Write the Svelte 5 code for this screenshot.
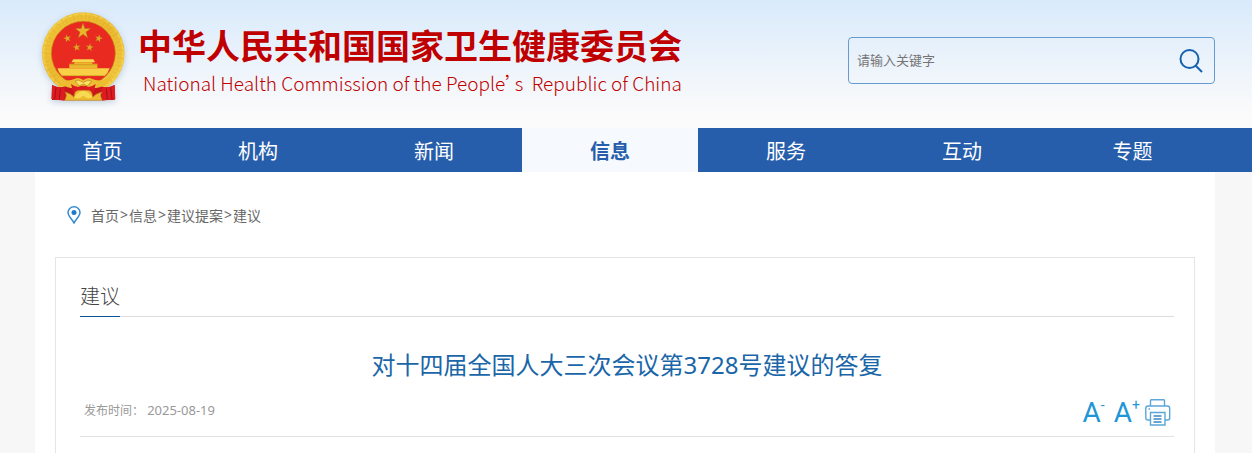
<script>
    const navItems = ['首页', '机构', '新闻', '信息', '服务', '互动', '专题']
    const crumbs = ['首页', '信息', '建议提案', '建议']
    const smallStars = [[112, 115, -15], [206, 115, 15], [140, 142, -8], [179, 142, 8]]
    const star = 'M0-24 5.500-7.500 23-7.500 9 3 14 20 0 10-14 20-9 3-23-7.500-5.500-7.500Z'

    let active = $state('信息')
    let keyword = $state('')
    let titleSize = $state(24)
</script>

<div class="page">
    <header>
        <div class="wrap head">
            <a class="brand" href="#home">
                <svg class="emblem" viewBox="30 30 261 279" aria-hidden="true">
                    <defs>
                        <linearGradient id="gold" x1="0" y1="0" x2="1" y2="1">
                            <stop offset="0" stop-color="#f0c83c" />
                            <stop offset=".5" stop-color="#eab82f" />
                            <stop offset="1" stop-color="#f4cf45" />
                        </linearGradient>
                    </defs>
                    <circle cx="160" cy="161" r="124" fill="url(#gold)" />
                    <circle cx="160" cy="161" r="111" fill="none" stroke="#d39a20" stroke-width="18" stroke-dasharray="3 7 5 9" opacity=".2" />
                    <circle cx="160" cy="161" r="119" fill="none" stroke="#f7dd61" stroke-width="4" stroke-dasharray="14 5" opacity=".6" />
                    <circle cx="160" cy="160" r="96" fill="#e92a20" stroke="#c58a17" stroke-width="2" />
                    <path d={star} transform="translate(159 93)" fill="#e9b52b" stroke="#a8701a" />
                    {#each smallStars as [x, y, turn]}
                        <path d={star} transform="translate({x} {y}) rotate({turn}) scale(.5)" fill="#e0a829" stroke="#a8701a" />
                    {/each}
                    <path d="M130 178H190L195 187H124Z" fill="#f7d54d" />
                    <path d="M133 187H187V191H202V204H118V191H133Z" fill="#eab82d" />
                    <path d="M119 194H201" stroke="#c98b1d" stroke-width="2" />
                    <path d="M82 205H239Q234 220 224 228H96Q86 218 82 205Z" fill="#f7d045" />
                    <path d="M96 227H224" stroke="#cc941d" stroke-width="2" />
                    <path d="M66 255Q97 270 116 252L160 259 204 252Q223 270 254 255V300H66Z" fill="#c9151b" />
                    <path d="M66 255Q86 266 104 262L104 302 64 297ZM254 255Q234 266 216 262V302L256 297Z" fill="#dc1c20" />
                    <path d="M78 262 74 297M91 266 88 299M242 262 246 297M229 266 232 299" stroke="#a90d16" stroke-width="3" />
                    <path d="M76 226Q104 250 135 236Q145 231 160 240Q175 231 185 236Q216 250 246 226Q237 263 187 265L160 256 133 265Q88 263 76 226Z" fill="#edbd31" />
                    <path d="M135 243Q145 236 160 247Q175 236 185 243L173 258 160 252 147 258Z" fill="#fae062" stroke="#b77a19" stroke-width="2" />
                    <path d="M123 252Q140 266 160 258Q180 266 197 252L191 277H129Z" fill="#dc1b20" />
                    <path d="M104 301Q113 285 105 276Q124 281 132 292Q132 273 145 271H175Q188 273 188 292Q196 281 216 276Q208 285 217 301Z" fill="#eeb92d" stroke="#bd7d1c" stroke-width="2" />
                    <path d="M132 292Q160 252 188 292Q174 300 160 287Q146 300 132 292Z" fill="#f7d953" />
                </svg>
                <span class="names">
                    <strong>中华人民共和国国家卫生健康委员会</strong>
                    <span class="english" lang="en">National Health Commission of the People’s&nbsp; Republic of China</span>
                </span>
            </a>
            <form class="search" onsubmit={(e) => e.preventDefault()}>
                <input type="text" aria-label="请输入关键字" placeholder="请输入关键字" bind:value={keyword} />
                <button aria-label="搜索">
                    <svg viewBox="0 0 24 24" width="24" height="24" fill="none" stroke="#1461b0" stroke-width="2">
                        <circle cx="10.500" cy="10" r="9" />
                        <path d="M16.500 16.500 23 23" />
                    </svg>
                </button>
            </form>
        </div>
    </header>

    <nav>
        <div class="wrap menu">
            {#each navItems as item}
                <a href="#{item}" class:active={item === active} onclick={() => active = item}>{item}</a>
            {/each}
        </div>
    </nav>

    <div class="body">
        <main class="wrap">
            <div class="crumbs">
                <svg viewBox="0 0 14 18" width="14" height="18" fill="none" stroke="#348bd0" stroke-width="1.500">
                    <path d="M7 17C5 13 1 10 1 6.500a6 5.700 0 0 1 12 0C13 10 9 13 7 17Z" />
                    <circle cx="7" cy="6.500" r="2.500" fill="#1c7bca" stroke="none" />
                </svg>
                {#each crumbs as crumb, i}
                    {#if i > 0}<span class="sep">&gt;</span>{/if}<a href="#{crumb}">{crumb}</a>
                {/each}
            </div>

            <article>
                <div class="section"><h2>建议</h2></div>
                <h1 style="font-size: {titleSize}px">对十四届全国人大三次会议第3728号建议的答复</h1>
                <div class="meta">
                    <span class="date">发布时间： <time>2025-08-19</time></span>
                    <div class="tools">
                        <button aria-label="缩小字体" onclick={() => titleSize -= 2}>A<sup>-</sup></button>
                        <button aria-label="放大字体" onclick={() => titleSize += 2}>A<sup>+</sup></button>
                        <button aria-label="打印" onclick={() => window.print()}>
                            <svg viewBox="0 0 26 27" width="26" height="27" fill="none" stroke="#5aa7d8" stroke-width="1.400">
                                <path d="M5.500 7V1.500q0-.8.8-.8h12.400q.8 0 .8.800V7" />
                                <path d="M5.500 21H3q-2.200 0-2.200-2V9.200Q.8 7 3 7h19.500q2.200 0 2.200 2.200V19q0 2-2.200 2h-2.500" />
                                <path d="M5.500 13.500H20V26H5.500Z" />
                                <path d="M8.500 17h8M8.500 20h8M8.500 23h8" stroke="#3b86c4" />
                                <path d="M3.500 10h1.500" />
                            </svg>
                        </button>
                    </div>
                </div>
            </article>
        </main>
    </div>
</div>

<style>
    :global(body) {
        margin: 0;
        background: #f7f7f7;
    }
    .page {
        display: flex;
        flex-direction: column;
        min-height: 100vh;
        font-family: "Noto Sans", "Noto Sans CJK SC", sans-serif;
    }
    a {
        color: inherit;
        text-decoration: none;
    }
    button {
        padding: 0;
        border: 0;
        background: none;
        cursor: pointer;
    }
    svg {
        display: block;
        flex: none;
    }
    header, nav, .body {
        padding-right: 2px;
    }
    .wrap {
        box-sizing: border-box;
        width: 100%;
        max-width: 1180px;
        margin: 0 auto;
    }
    header {
        background: linear-gradient(#d9eafb, #fbfbfb 90%);
    }
    .head {
        display: flex;
        justify-content: space-between;
        align-items: flex-start;
        height: 128px;
    }
    .brand {
        display: flex;
        gap: 11px;
        padding: 10px 0 0 5px;
        color: #c00000;
    }
    .emblem {
        width: 87px;
        height: 93px;
        filter: drop-shadow(0 2px 3px #8ba4c080);
    }
    .names {
        padding-top: 12px;
        font-family: "Noto Sans CJK SC", sans-serif;
        white-space: nowrap;
    }
    strong {
        display: block;
        font-size: 34px;
        font-weight: 700;
        line-height: 46px;
    }
    .english {
        display: block;
        padding-left: 5px;
        font-size: 19px;
        font-weight: 300;
        font-feature-settings: "palt";
        line-height: 30px;
    }
    .search {
        box-sizing: border-box;
        display: flex;
        align-items: center;
        width: 367px;
        height: 47px;
        margin-top: 37px;
        padding: 0 11px 0 8px;
        border: 1px solid #659ad3;
        border-radius: 4px;
    }
    input {
        flex: 1;
        min-width: 0;
        padding: 0 0 2px;
        border: 0;
        outline: 0;
        background: none;
        font: 13px "Noto Sans CJK SC", sans-serif;
    }
    input::placeholder {
        color: #757575;
    }
    nav {
        background: #265eab;
    }
    .menu {
        display: grid;
        grid-template-columns: 135fr repeat(5, 176fr) 165fr;
    }
    .menu a {
        padding-top: 4px;
        color: #fff;
        font-size: 20px;
        line-height: 40px;
        text-align: center;
    }
    .menu .active {
        background: #f6faff;
        color: #265eab;
        font-weight: 700;
    }
    .body {
        flex: 1;
        display: flex;
    }
    main {
        display: flex;
        flex-direction: column;
        padding: 0 20px;
        background: #fff;
    }
    .crumbs {
        display: flex;
        align-items: center;
        height: 85px;
        padding-left: 12px;
        color: #666;
        font-size: 14px;
    }
    .crumbs svg {
        margin-right: 10px;
    }
    .sep {
        padding: 0 1px;
    }
    article {
        flex: 1;
        padding: 20px 20px 0 24px;
        border: 1px solid #e5e5e5;
        border-bottom: 0;
    }
    .section {
        display: flex;
        border-bottom: 1px solid #ddd;
    }
    h2 {
        margin: 0 0 -1px;
        border-bottom: 1px solid #0b5293;
        color: #444;
        font-size: 20px;
        font-weight: 300;
        line-height: 38px;
    }
    h1 {
        margin: 28px 0 12px;
        color: #1a66a8;
        font-weight: 400;
        line-height: 40px;
        text-align: center;
    }
    .meta {
        display: flex;
        justify-content: space-between;
        align-items: center;
        height: 39px;
        padding: 0 3px 0 4px;
        border-bottom: 1px solid #e2e2e2;
    }
    .date {
        padding-bottom: 12px;
        color: #999;
        font-size: 12px;
        line-height: 24px;
    }
    time {
        font-size: 13px;
    }
    .tools {
        display: flex;
        align-items: center;
        gap: 5px;
        padding-bottom: 8px;
    }
    .tools button {
        display: flex;
        color: #2196d6;
        font: 28px/28px Roboto, sans-serif;
    }
    sup {
        width: 8px;
        font-size: 14px;
        line-height: 12px;
        text-align: left;
    }
</style>
